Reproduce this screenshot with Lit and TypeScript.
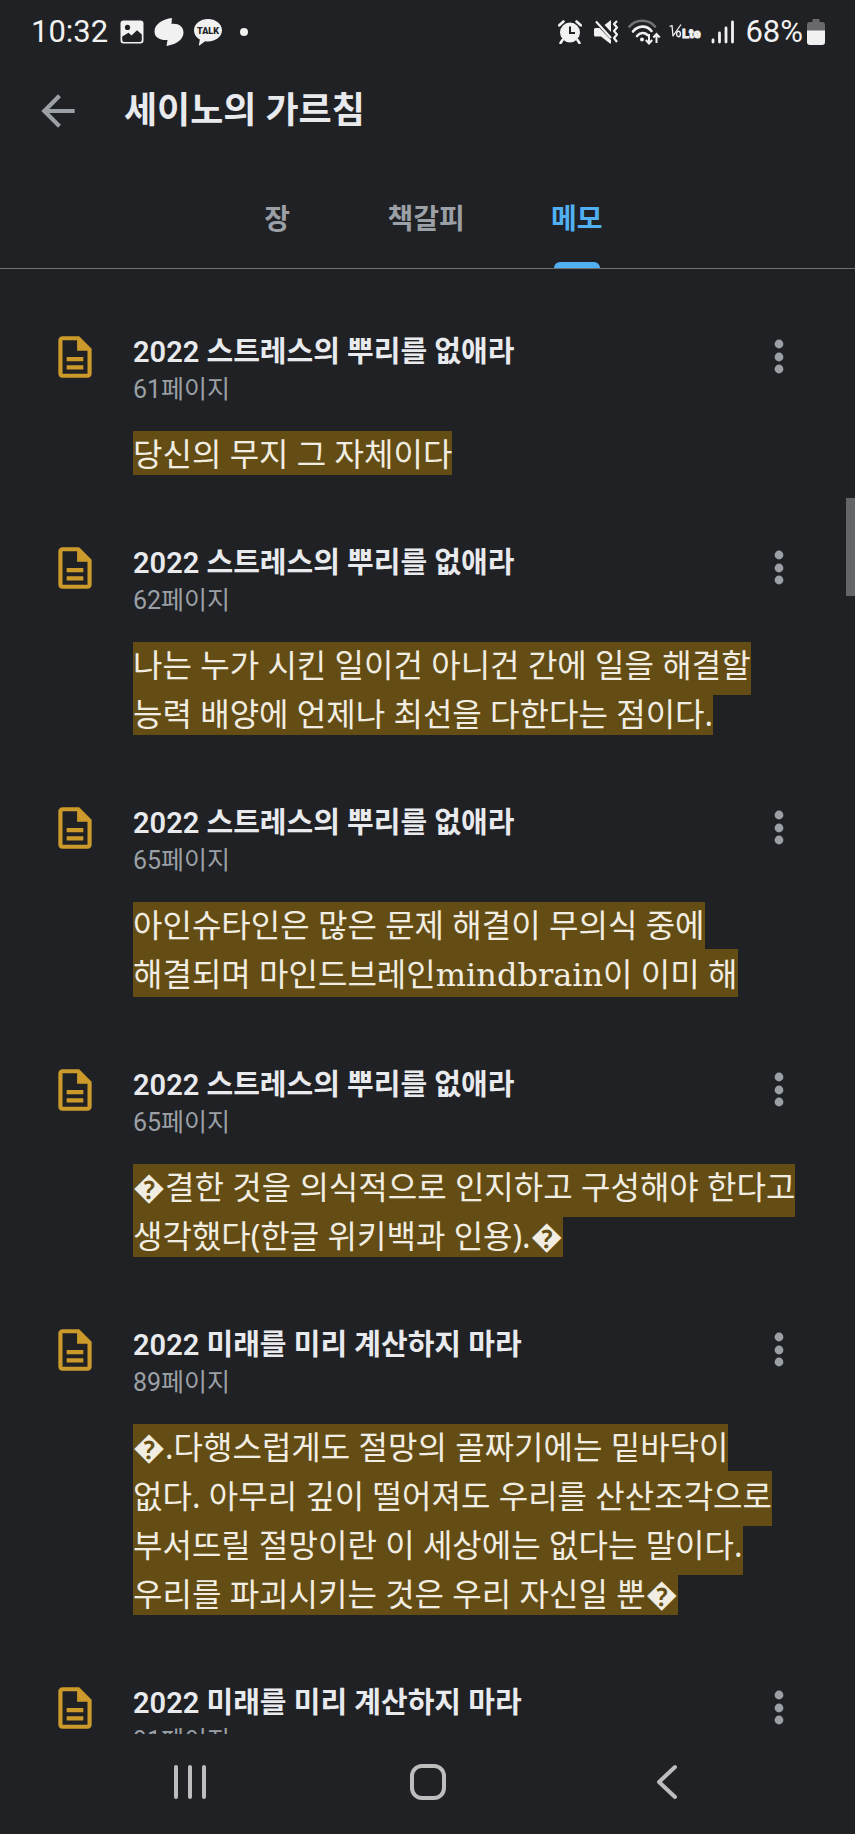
import { LitElement, html, css, svg, nothing } from "lit";
import { customElement, property, state } from "lit/decorators.js";

interface Memo {
  chapter: string;
  page: number;
  quote: string;
}

const MEMOS: Memo[] = [
  { chapter: "2022 스트레스의 뿌리를 없애라", page: 61, quote: "당신의 무지 그 자체이다" },
  {
    chapter: "2022 스트레스의 뿌리를 없애라",
    page: 62,
    quote: "나는 누가 시킨 일이건 아니건 간에 일을 해결할 능력 배양에 언제나 최선을 다한다는 점이다.",
  },
  {
    chapter: "2022 스트레스의 뿌리를 없애라",
    page: 65,
    quote: "아인슈타인은 많은 문제 해결이 무의식 중에 해결되며 마인드브레인mindbrain이 이미 해",
  },
  {
    chapter: "2022 스트레스의 뿌리를 없애라",
    page: 65,
    quote: "\uFFFD결한 것을 의식적으로 인지하고 구성해야 한다고 생각했다(한글 위키백과 인용).\uFFFD",
  },
  {
    chapter: "2022 미래를 미리 계산하지 마라",
    page: 89,
    quote:
      "\uFFFD.다행스럽게도 절망의 골짜기에는 밑바닥이 없다. 아무리 깊이 떨어져도 우리를 산산조각으로 부서뜨릴 절망이란 이 세상에는 없다는 말이다. 우리를 파괴시키는 것은 우리 자신일 뿐\uFFFD",
  },
  { chapter: "2022 미래를 미리 계산하지 마라", page: 91, quote: "" },
];

@customElement("status-bar")
class StatusBar extends LitElement {
  static styles = css`
    :host {
      display: flex;
      flex: none;
      align-items: center;
      justify-content: space-between;
      height: 64px;
      padding: 0 30px 0 31px;
      color: #f1f1f1;
      font: 400 31px/40px Roboto, sans-serif;
    }
    .group {
      display: flex;
      align-items: center;
    }
    .left {
      gap: 10px;
    }
    .time {
      margin-right: 2px;
    }
    .right {
      gap: 8px;
    }
    .level {
      display: flex;
      align-items: center;
      gap: 4px;
      margin-left: 2px;
    }
    svg {
      display: block;
      fill: currentColor;
    }
    .dot {
      width: 8px;
      height: 8px;
      margin-left: 8px;
      border-radius: 50%;
      background: currentColor;
    }
    .talk {
      font: 900 9px Roboto, sans-serif;
      fill: #202124;
    }
    .volte-v {
      font: italic 400 16px "Liberation Serif", serif;
    }
    .volte-o {
      font: italic 700 11px "Liberation Serif", serif;
    }
    .volte-l {
      font: 900 13px Roboto, sans-serif;
      stroke: currentColor;
      stroke-width: 0.8;
    }
  `;

  render() {
    return html`
      <div class="group left">
        <span class="time">10:32</span>
        <svg width="24" height="24" viewBox="0 0 24 24" aria-hidden="true">
          <path
            fill-rule="evenodd"
            d="M3.500 0.500h17a3 3 0 0 1 3 3v17a3 3 0 0 1-3 3h-17a3 3 0 0 1-3-3v-17a3 3 0 0 1 3-3zM2.200 16.500V20a2 2 0 0 0 2 2h15.600a2 2 0 0 0 2-2v-5.500L17 10.200l-5.500 5.300-3-2.700zM7.500 4.800a2.600 2.600 0 1 0 0 5.200 2.600 2.600 0 0 0 0-5.200z"
          />
        </svg>
        <svg width="30" height="28" viewBox="0 0 30 28" aria-hidden="true">
          <path
            d="M18 0 17.500 6C24 5 29.500 8.500 29.500 14.500 29.500 20.500 24 26 12.500 28L13.500 22C6 22.500 0.500 19.500 0.500 13.500 0.500 6 9 1 18 0z"
          />
        </svg>
        <svg width="28" height="27" viewBox="0 0 28 27" aria-hidden="true">
          <path
            d="M14 0c7.700 0 14 4.900 14 11.200S21.700 22.400 14 22.400c-1 0-2-.1-2.900-.2L5.800 26.300c-.6.400-1.100.2-.9-.6l1-5.200C2.300 18.600 0 15.100 0 11.200 0 4.900 6.300 0 14 0z"
          />
          <text class="talk" x="14" y="15" text-anchor="middle">TALK</text>
        </svg>
        <span class="dot"></span>
      </div>
      <div class="group right">
        <svg width="28" height="24" viewBox="0 0 28 24" aria-hidden="true">
          <path
            fill-rule="evenodd"
            d="M12 2.500a10 10 0 1 1 0 20 10 10 0 0 1 0-20zM11 6.500v7.500h6v-2h-4V6.500z"
          />
          <path
            d="M1.300 5.300 5.500 1.500M22.700 5.300 18.500 1.500M4.500 20 2.500 23M19.500 20l2 3"
            fill="none"
            stroke="currentColor"
            stroke-width="2.600"
            stroke-linecap="round"
          />
        </svg>
        <svg width="26" height="24" viewBox="0 0 26 24" aria-hidden="true">
          <path d="M1 8h4.500L17 20v3.500h-1L7 16.500H1.500A1.500 1.500 0 0 1 0 15V9zM10.500 5 17 0v12z" />
          <path
            d="M2 1.500 17 18M23 1l-3 3 3 3.500-3 3.500 3 3.500-3 3.500 3 4"
            fill="none"
            stroke="currentColor"
            stroke-width="2.200"
            stroke-linejoin="round"
          />
        </svg>
        <svg width="33" height="26" viewBox="0 0 33 26" aria-hidden="true">
          <g fill="none" stroke="currentColor" stroke-width="2.600" stroke-linecap="round">
            <path d="M1.500 7.500C8-0.200 20.500-0.200 27 7.500" opacity="0.4" />
            <path d="M5 12.500c5-6.400 14-6.400 18.500-.5M9 17c3-3.600 7.500-4 10.500-1" />
          </g>
          <circle cx="14" cy="20.500" r="2" />
          <path
            d="M21 15v9M17.800 21l3.200 3.500 3.200-3.500M28.500 24v-8.500M25.300 18.500l3.200-3.500 3.200 3.500"
            fill="none"
            stroke="currentColor"
            stroke-width="2"
          />
        </svg>
        <svg width="34" height="18" viewBox="0 0 34 18" role="img" aria-label="VoLTE">
          <path
            d="M0.500 3.500 3 2.500 4 13 12 1.500"
            fill="none"
            stroke="currentColor"
            stroke-width="1.300"
            stroke-linejoin="round"
          />
          <ellipse cx="9.500" cy="11" rx="1.900" ry="2.800" fill="none" stroke="currentColor" stroke-width="1.400" />
          <text class="volte-l" x="13" y="15">Lte</text>
        </svg>
        <svg width="24" height="24" viewBox="0 0 24 24" aria-hidden="true">
          <path
            d="M2 20v2M8.500 13v9M15 8v14M21.500 2v20"
            fill="none"
            stroke="currentColor"
            stroke-width="2.800"
            stroke-linecap="round"
          />
        </svg>
        <span class="level">
          <span>68%</span>
          <svg width="18" height="26" viewBox="0 0 18 26" aria-hidden="true">
            <path d="M5.500 0h7v3H15a3 3 0 0 1 3 3v6H0V6a3 3 0 0 1 3-3h2.500z" fill="#69696b" />
            <path d="M0 11.500h18V23a3 3 0 0 1-3 3H3a3 3 0 0 1-3-3z" />
          </svg>
        </span>
      </div>
    `;
  }
}

@customElement("memo-item")
class MemoItem extends LitElement {
  @property({ attribute: false }) memo!: Memo;

  static styles = css`
    :host {
      display: grid;
      grid-template-columns: 50px minmax(0, 1fr) 48px;
      column-gap: 33px;
      padding: 0 52px 0 50px;
    }
    .icon {
      display: block;
      fill: #cb9a2a;
    }
    .chapter {
      margin: 0;
      color: #e8eaed;
      font: 600 29px/40px Roboto, "Noto Sans CJK KR", sans-serif;
    }
    .page {
      margin: 0;
      color: #9aa0a6;
      font: 400 25px/36px Roboto, "Noto Sans CJK KR", sans-serif;
    }
    .more {
      display: grid;
      place-items: center;
      width: 48px;
      height: 50px;
      padding: 0;
      border: 0;
      background: none;
      fill: #9aa0a6;
    }
    /* Spans the text and menu columns; trims the leading above and below the lines. */
    .quote {
      grid-column: 2 / 4;
      margin: 23px 0 0;
      overflow: hidden;
    }
    .quote p {
      margin: -2px 0 -3px;
      font: 400 32px/49px "Noto Sans", "Noto Sans CJK KR", sans-serif;
      word-break: keep-all;
    }
    mark {
      padding: 3px 0 9px;
      background: #634d14;
      color: #f2ede2;
    }
    .latin {
      font-family: "DejaVu Serif", serif;
    }
  `;

  private renderQuote(text: string) {
    return text
      .split(/([A-Za-z]+)/)
      .map((part) => (/^[A-Za-z]/.test(part) ? html`<span class="latin">${part}</span>` : part));
  }

  render() {
    const { chapter, page, quote } = this.memo;
    return html`
      <svg class="icon" width="50" height="50" viewBox="0 0 24 24" aria-hidden="true">
        <path
          d="M8 16h8v2H8zm0-4h8v2H8zm6-10H6c-1.100 0-2 .9-2 2v16c0 1.100.89 2 1.990 2H18c1.100 0 2-.9 2-2V8l-6-6zm4 18H6V4h7v5h5v11z"
        />
      </svg>
      <div>
        <h2 class="chapter">${chapter}</h2>
        <p class="page">${page}페이지</p>
      </div>
      <button class="more" aria-label="더보기">
        <svg width="10" height="36" viewBox="0 0 10 36" aria-hidden="true">
          ${[5, 18, 30].map((y) => svg`<circle cx="5" cy=${y} r="4.400" />`)}
        </svg>
      </button>
      ${quote
        ? html`<blockquote class="quote"><p><mark>${this.renderQuote(quote)}</mark></p></blockquote>`
        : nothing}
    `;
  }
}

@customElement("app-root")
class AppRoot extends LitElement {
  @state() private active = "메모";

  static styles = css`
    :host {
      display: flex;
      flex-direction: column;
      height: 100vh;
      background: #202124;
      color: #e8eaed;
      font-family: Roboto, "Noto Sans CJK KR", sans-serif;
    }
    button {
      margin: 0;
      border: 0;
      background: none;
      font-family: inherit;
    }
    .header {
      display: flex;
      flex: none;
      align-items: center;
      gap: 41px;
      height: 94px;
      padding: 0 33px;
    }
    .back {
      width: 50px;
      height: 50px;
      padding: 0;
      fill: #9aa0a6;
    }
    .title {
      margin: 0;
      font-size: 36px;
      font-weight: 600;
      line-height: 48px;
    }
    .tabs {
      display: flex;
      flex: none;
      justify-content: center;
      height: 100px;
      margin-top: 10px;
      border-bottom: 1px solid #6f7174;
    }
    .tab {
      display: grid;
      grid-template-rows: 1fr 6px;
      justify-items: center;
      align-items: center;
      min-width: 135px;
      padding: 10px 43px 0;
      color: #9aa0a6;
      font-size: 28px;
      font-weight: 600;
      line-height: 40px;
    }
    .tab[aria-selected="true"] {
      color: #50b0f2;
    }
    .tab[aria-selected="true"]::after {
      content: "";
      width: 46px;
      height: 6px;
      border-radius: 6px 6px 0 0;
      background: currentColor;
    }
    .content {
      position: relative;
      flex: 1;
      min-height: 0;
    }
    .list {
      display: flex;
      flex-direction: column;
      gap: 68px;
      box-sizing: border-box;
      height: 100%;
      margin: 0;
      padding: 63px 0 0;
      list-style: none;
      overflow-y: auto;
      scrollbar-width: none;
    }
    .thumb {
      position: absolute;
      top: 229px;
      right: 0;
      width: 9px;
      height: 98px;
      background: #636569;
    }
    .nav {
      display: grid;
      flex: none;
      grid-template-columns: repeat(3, 28%);
      justify-content: center;
      height: 100px;
      padding: 0 0 4px 2px;
      box-sizing: border-box;
      color: #bdbdbe;
    }
    .nav button {
      display: grid;
      place-items: center;
      padding: 0;
      color: inherit;
    }
    .nav svg {
      fill: none;
      stroke: currentColor;
      stroke-width: 4;
      stroke-linecap: round;
      stroke-linejoin: round;
    }
  `;

  render() {
    return html`
      <status-bar></status-bar>
      <header class="header">
        <button class="back" aria-label="뒤로">
          <svg width="50" height="50" viewBox="0 0 24 24" aria-hidden="true">
            <path d="M20 11H7.830l5.590-5.590L12 4l-8 8 8 8 1.410-1.410L7.830 13H20v-2z" />
          </svg>
        </button>
        <h1 class="title">세이노의 가르침</h1>
      </header>
      <div class="tabs" role="tablist">
        ${["장", "책갈피", "메모"].map(
          (name) => html`<button
            class="tab"
            role="tab"
            aria-selected=${name === this.active ? "true" : "false"}
            @click=${() => (this.active = name)}
          ><span>${name}</span></button>`
        )}
      </div>
      <main class="content">
        <ul class="list">
          ${MEMOS.map((memo) => html`<li><memo-item .memo=${memo}></memo-item></li>`)}
        </ul>
        <div class="thumb"></div>
      </main>
      <nav class="nav">
        <button aria-label="최근 앱">
          <svg width="38" height="38" viewBox="0 0 38 38"><path d="M5 4v30M19 4v30M33 4v30" /></svg>
        </button>
        <button aria-label="홈">
          <svg width="38" height="38" viewBox="0 0 38 38">
            <rect x="3" y="3" width="32" height="32" rx="10" />
          </svg>
        </button>
        <button aria-label="이전">
          <svg width="38" height="38" viewBox="0 0 38 38"><path d="M27 4 11 19l16 15" /></svg>
        </button>
      </nav>
    `;
  }
}
